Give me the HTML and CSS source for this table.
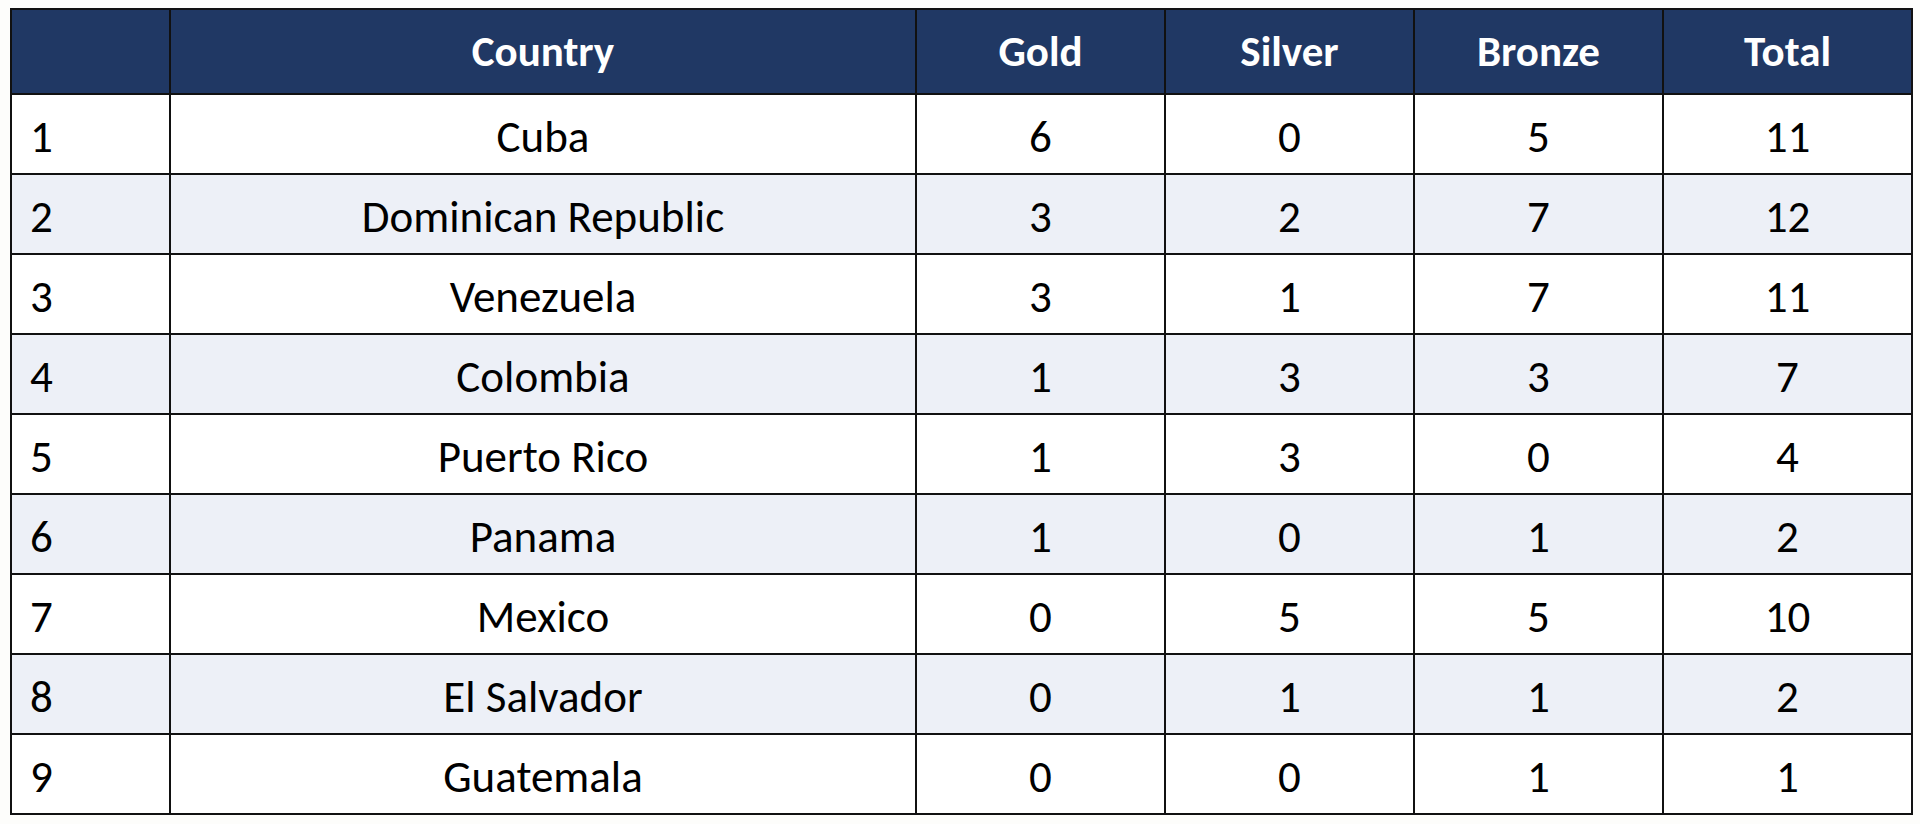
FILE: index.html
```html
<!DOCTYPE html>
<html lang="en">
<head>
<meta charset="utf-8">
<title>Medal Table</title>
<link rel="stylesheet" href="styles.css">
</head>
<body>
<table class="medals">
  <colgroup>
    <col class="c-rank">
    <col class="c-country">
    <col class="c-num">
    <col class="c-num">
    <col class="c-num">
    <col class="c-num">
  </colgroup>
  <thead>
    <tr>
      <th></th>
      <th>Country</th>
      <th>Gold</th>
      <th>Silver</th>
      <th>Bronze</th>
      <th>Total</th>
    </tr>
  </thead>
  <tbody>
    <tr><td class="rank">1</td><td>Cuba</td><td>6</td><td>0</td><td>5</td><td>11</td></tr>
    <tr><td class="rank">2</td><td>Dominican Republic</td><td>3</td><td>2</td><td>7</td><td>12</td></tr>
    <tr><td class="rank">3</td><td>Venezuela</td><td>3</td><td>1</td><td>7</td><td>11</td></tr>
    <tr><td class="rank">4</td><td>Colombia</td><td>1</td><td>3</td><td>3</td><td>7</td></tr>
    <tr><td class="rank">5</td><td>Puerto Rico</td><td>1</td><td>3</td><td>0</td><td>4</td></tr>
    <tr><td class="rank">6</td><td>Panama</td><td>1</td><td>0</td><td>1</td><td>2</td></tr>
    <tr><td class="rank">7</td><td>Mexico</td><td>0</td><td>5</td><td>5</td><td>10</td></tr>
    <tr><td class="rank">8</td><td>El Salvador</td><td>0</td><td>1</td><td>1</td><td>2</td></tr>
    <tr><td class="rank">9</td><td>Guatemala</td><td>0</td><td>0</td><td>1</td><td>1</td></tr>
  </tbody>
</table>
</body>
</html>
```
FILE: styles.css
```css
html, body {
  margin: 0;
  background: #fdfdfb;
}
body {
  padding: 8px 10px;
  font-family: Carlito, Calibri, Lato, "Liberation Sans", sans-serif;
  color: #000;
}
.medals {
  border-collapse: collapse;
  table-layout: fixed;
  width: 1900px;
  border: 2px solid #111;
}
.c-rank { width: 159px; }
.c-country { width: 746px; }
.c-num { width: 249px; }
.medals th,
.medals td {
  border: 2px solid #111;
  text-align: center;
  padding: 0;
  font-size: 45px;
  line-height: 1;
}
.medals thead th {
  background: #203864;
  color: #fff;
  font-weight: 700;
  font-size: 43px;
  height: 83px;
}
.medals tbody td {
  height: 80px;
  padding-top: 4px;
  box-sizing: border-box;
  background: #fff;
}
.medals tbody tr:nth-child(even) td {
  background: #edf0f7;
}
.medals td.rank {
  text-align: left;
  padding-left: 18px;
}
```
